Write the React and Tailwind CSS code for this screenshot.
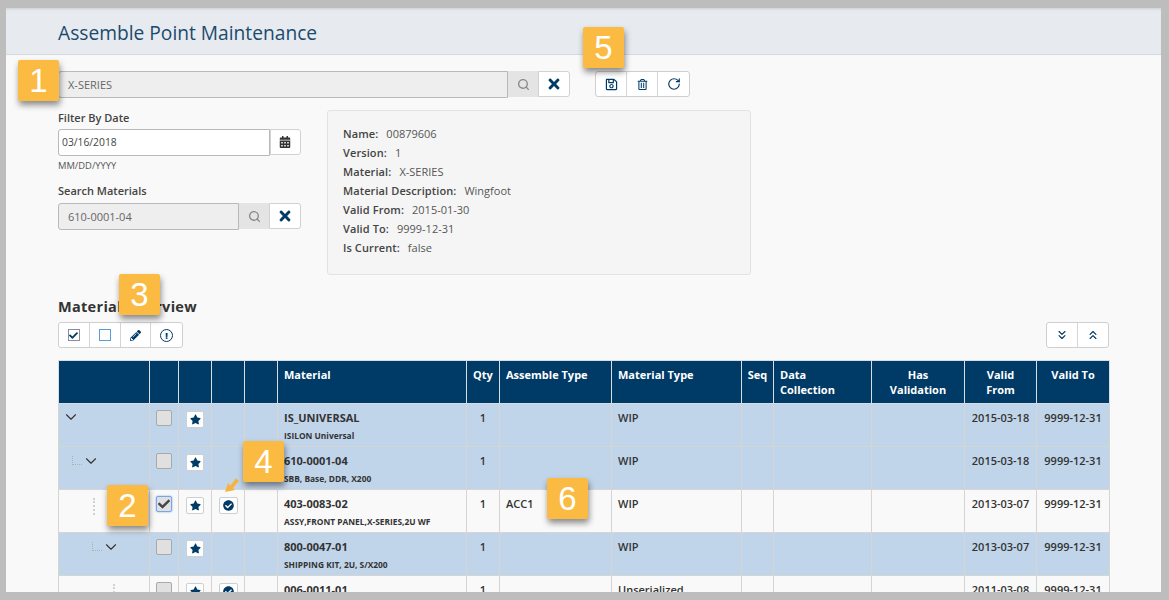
import React from "react";
import { ChevronDown, ChevronsDown, ChevronsUp, RotateCw, Search } from "lucide-react";
import {
  FaTimes,
  FaRegSave,
  FaRegTrashAlt,
  FaCalendarAlt,
  FaCheck,
  FaPencilAlt,
  FaStar,
  FaCheckCircle,
} from "react-icons/fa";

const NAVY = "text-[#003a66]";

const Badge = ({ n, className }) => (
  <div
    className={`absolute z-20 w-[41px] h-[41px] flex items-center justify-center rounded-[2px] bg-[#fbbb43] text-white text-[33px] shadow-[1px_4px_6px_rgba(0,0,0,0.45)] ${className}`}
    style={{ fontFamily: '"Liberation Sans", sans-serif' }}
  >
    {n}
  </div>
);

const ToolGroup = ({ children, cellClass = "w-[31px]" }) => (
  <div className="flex h-[26px] bg-white border border-[#cfcfcf] rounded-[3px] divide-x divide-[#d4d4d4]">
    {React.Children.map(children, (c) => (
      <div className={`${cellClass} flex items-center justify-center`}>{c}</div>
    ))}
  </div>
);

const SearchField = ({ value, inputClass }) => (
  <div className="flex h-[27px]">
    <div className={`${inputClass} bg-[#eeeeee] border border-[#b9b9b9] rounded-l-[3px] pl-[9px] pt-[1px] flex items-center text-[11px] text-[#666]`}>
      {value}
    </div>
    <div className="w-[30px] h-[26px] bg-[#e4e4e4] flex items-center justify-center text-[#888]">
      <Search size={13} strokeWidth={2.5} />
    </div>
    <div className={`w-[32px] h-[26px] bg-white border border-[#d2d2d2] rounded-r-[3px] flex items-center justify-center text-[16px] ${NAVY}`}>
      <FaTimes />
    </div>
  </div>
);

const info = [
  ["Name:", "00879606"],
  ["Version:", "1"],
  ["Material:", "X-SERIES"],
  ["Material Description:", "Wingfoot"],
  ["Valid From:", "2015-01-30"],
  ["Valid To:", "9999-12-31"],
  ["Is Current:", "false"],
];

const rows = [
  { tree: "root", name: "IS_UNIVERSAL", desc: "ISILON Universal", type: "WIP", from: "2015-03-18", blue: true },
  { tree: "l1", name: "610-0001-04", desc: "SBB, Base, DDR, X200", type: "WIP", from: "2015-03-18", blue: true },
  { tree: "v1", name: "403-0083-02", desc: "ASSY,FRONT PANEL,X-SERIES,2U WF", type: "WIP", from: "2013-03-07", checked: true, done: true, assemble: "ACC1" },
  { tree: "l2", name: "800-0047-01", desc: "SHIPPING KIT, 2U, S/X200", type: "WIP", from: "2013-03-07", blue: true },
  { tree: "v2", name: "006-0011-01", desc: "", type: "Unserialized", from: "2011-03-08", done: true },
];

const Corner = () => (
  <span className="w-[10px] h-[9px] mt-[4px] border-l border-b border-dotted border-[#a9b5a9]" />
);

const Chevron = () => <ChevronDown size={18} strokeWidth={1.5} className="text-[#333]" />;

const Tree = ({ kind }) => {
  if (kind === "root") {
    return (
      <div className="flex items-start pl-[3px] pt-[4px]">
        <Chevron />
      </div>
    );
  }
  if (kind === "l1" || kind === "l2") {
    return (
      <div className={`flex items-start pt-[5px] ${kind === "l1" ? "pl-[13px]" : "pl-[33px]"}`}>
        <Corner />
        <Chevron />
      </div>
    );
  }
  return (
    <div className={`pt-[8px] ${kind === "v1" ? "pl-[34px]" : "pl-[54px]"}`}>
      <div className="h-[17px] w-0 border-l-2 border-dotted border-[#cfd3c8]" />
    </div>
  );
};

const td = "border border-[#d5d5d5] align-top p-0";
const th = "border border-[#d8dde2] align-top px-[6px] pt-[6px] font-bold text-[11px] leading-[15px] text-white";
const cellText = "px-[6px] pt-[6px] text-[11px] leading-[15px] font-semibold text-[#333]";

const Row = ({ r }) => (
  <tr className={`h-[43px] ${r.blue ? "bg-[#c1d5ea]" : "bg-[#f9f9f9]"}`}>
    <td className={td}>
      <Tree kind={r.tree} />
    </td>
    <td className={td}>
      <div className="pt-[6px] flex justify-center">
        <div
          className={`w-[16px] h-[16px] rounded-[2px] bg-[#e0e0e0] flex items-center justify-center text-[#444] text-[12px] border ${
            r.checked ? "border-[#78a6ea] shadow-[0_0_2px_#78a6ea]" : "border-[#a9a9a9]"
          }`}
        >
          {r.checked && <FaCheck />}
        </div>
      </div>
    </td>
    <td className={td}>
      <div className="pt-[7px] flex justify-center">
        <div className={`w-[18px] h-[17px] bg-white border border-[#cfcfcf] rounded-[2px] flex items-center justify-center text-[11px] ${NAVY}`}>
          <FaStar />
        </div>
      </div>
    </td>
    <td className={td}>
      {r.done && (
        <div className="pt-[7px] flex justify-center">
          <div className={`w-[19px] h-[17px] bg-white border border-[#cfcfcf] rounded-[2px] flex items-center justify-center text-[11px] ${NAVY}`}>
            <FaCheckCircle />
          </div>
        </div>
      )}
    </td>
    <td className={td}></td>
    <td className={td}>
      <div className="px-[6px] pt-[6px]">
        <div className="text-[11px] leading-[15px] font-bold text-[#333]">{r.name}</div>
        <div className="text-[8.4px] leading-[12px] mt-[5px] font-bold text-[#333]">{r.desc}</div>
      </div>
    </td>
    <td className={td}>
      <div className={`${cellText} text-center font-bold`}>1</div>
    </td>
    <td className={td}>
      <div className={cellText}>{r.assemble}</div>
    </td>
    <td className={td}>
      <div className={cellText}>{r.type}</div>
    </td>
    <td className={td}></td>
    <td className={td}></td>
    <td className={td}></td>
    <td className={td}>
      <div className={`${cellText} text-center`}>{r.from}</div>
    </td>
    <td className={td}>
      <div className={`${cellText} text-center`}>9999-12-31</div>
    </td>
  </tr>
);

export default function App() {
  return (
    <div
      className="w-[1169px] h-[600px] bg-[#bdbdbd] pt-[8px] pl-[6px] pr-[8px] pb-[8px] overflow-hidden"
      style={{ fontFamily: '"Open Sans", sans-serif' }}
    >
      <div className="relative h-[584px] bg-[#f9f9f9] overflow-hidden">
        <div className="h-[47px] bg-[#e7eaef] border-b border-[#d5dadf] pl-[52px] pt-[3px] flex items-center shadow-[inset_0_3px_3px_-2px_rgba(0,0,0,0.12)]">
          <h1 className="text-[19.2px] text-[#1a4a6e] leading-none">Assemble Point Maintenance</h1>
        </div>

        <div className="px-[52px] pt-[16px]">
          <div className="flex">
            <SearchField value="X-SERIES" inputClass="w-[450px]" />
            <div className="ml-[25px]">
              <ToolGroup>
                <FaRegSave className={`text-[13px] ${NAVY}`} />
                <FaRegTrashAlt className={`text-[11px] ${NAVY}`} />
                <RotateCw size={14} strokeWidth={2} className={NAVY} />
              </ToolGroup>
            </div>
          </div>

          <div className="flex mt-[12px]">
            <div className="w-[243px]">
              <div className="text-[11px] font-semibold leading-[15px] text-[#444]">Filter By Date</div>
              <div className="flex h-[27px] mt-[4px]">
                <div className="w-[212px] bg-white border border-[#b9b9b9] rounded-l-[3px] pl-[3px] pt-[1px] flex items-center text-[10.3px] text-[#444]">
                  03/16/2018
                </div>
                <div className="w-[31px] h-[26px] bg-white border border-[#d2d2d2] rounded-r-[3px] pr-[1px] flex items-center justify-center text-[12px] text-[#333]">
                  <FaCalendarAlt />
                </div>
              </div>
              <div className="text-[9.4px] leading-[12px] mt-[4px] text-[#555]">MM/DD/YYYY</div>
              <div className="text-[11px] font-semibold leading-[15px] text-[#444] mt-[11px]">Search Materials</div>
              <div className="mt-[5px]">
                <SearchField value="610-0001-04" inputClass="w-[181px]" />
              </div>
            </div>
            <div className="ml-[26px] w-[424px] h-[165px] bg-[#f5f5f5] border border-[#e3e3e3] rounded-[3px] pl-[15px] pt-[13px]">
              {info.map(([k, v]) => (
                <div key={k} className="text-[11px] leading-[19px] text-[#444]">
                  <span className="font-semibold tracking-[0.1px]">{k}</span>
                  <span className="ml-[8px] text-[#555]">{v}</span>
                </div>
              ))}
            </div>
          </div>

          <h2 className="text-[14.5px] leading-[18px] font-bold text-[#333] mt-[23px] tracking-[0.3px]">Material Overview</h2>

          <div className="flex justify-between mt-[6px]">
            <ToolGroup cellClass="w-[30.75px]">
              <span className="w-[12px] h-[12px] border border-[#8c8c9c] flex items-center justify-center text-[9px] text-[#003a66]">
                <FaCheck />
              </span>
              <span className="w-[12px] h-[12px] border border-[#5b9bd5]" />
              <FaPencilAlt className={`text-[11px] ${NAVY}`} />
              <span className="w-[13px] h-[13px] rounded-full border-[1.5px] border-[#003a66] flex items-center justify-center text-[9px] font-extrabold leading-none text-[#003a66]">
                !
              </span>
            </ToolGroup>
            <ToolGroup cellClass="w-[30.5px]">
              <ChevronsDown size={14} strokeWidth={2} className={NAVY} />
              <ChevronsUp size={14} strokeWidth={2} className={NAVY} />
            </ToolGroup>
          </div>

          <table className="table-fixed border-collapse w-[1051px] mt-[12px]">
            <colgroup>
              <col className="w-[91px]" />
              <col className="w-[29px]" />
              <col className="w-[33px]" />
              <col className="w-[33px]" />
              <col className="w-[33px]" />
              <col className="w-[189px]" />
              <col className="w-[33px]" />
              <col className="w-[112px]" />
              <col className="w-[130px]" />
              <col className="w-[32px]" />
              <col className="w-[98px]" />
              <col className="w-[93px]" />
              <col className="w-[72px]" />
              <col className="w-[73px]" />
            </colgroup>
            <thead>
              <tr className="h-[43px] bg-[#003a66]">
                <th className={th}></th>
                <th className={th}></th>
                <th className={th}></th>
                <th className={th}></th>
                <th className={th}></th>
                <th className={`${th} text-left`}>Material</th>
                <th className={`${th} text-center`}>Qty</th>
                <th className={`${th} text-left whitespace-nowrap`}>Assemble Type</th>
                <th className={`${th} text-left`}>Material Type</th>
                <th className={`${th} text-center !px-0`}>Seq</th>
                <th className={`${th} text-left`}>
                  Data
                  <br />
                  Collection
                </th>
                <th className={`${th} text-center`}>
                  Has
                  <br />
                  Validation
                </th>
                <th className={`${th} text-center`}>
                  Valid
                  <br />
                  From
                </th>
                <th className={`${th} text-center`}>Valid To</th>
              </tr>
            </thead>
            <tbody>
              {rows.map((r) => (
                <Row key={r.name} r={r} />
              ))}
            </tbody>
          </table>
        </div>

        <Badge n="1" className="left-[12px] top-[52px]" />
        <Badge n="5" className="left-[577px] top-[19px]" />
        <Badge n="3" className="left-[113px] top-[266px]" />
        <Badge n="2" className="left-[101px] top-[477px]" />
        <Badge n="4" className="left-[237px] top-[433px]" />
        <Badge n="6" className="left-[541px] top-[470px]" />
        <svg className="absolute z-20 left-[218px] top-[469px]" width="16" height="16" viewBox="0 0 16 16">
          <path d="M1 15 L4 6 L6.5 8.5 L12 1 L15 4 L9 11 L11 13 Z" fill="#f5b342" />
        </svg>
      </div>
    </div>
  );
}
